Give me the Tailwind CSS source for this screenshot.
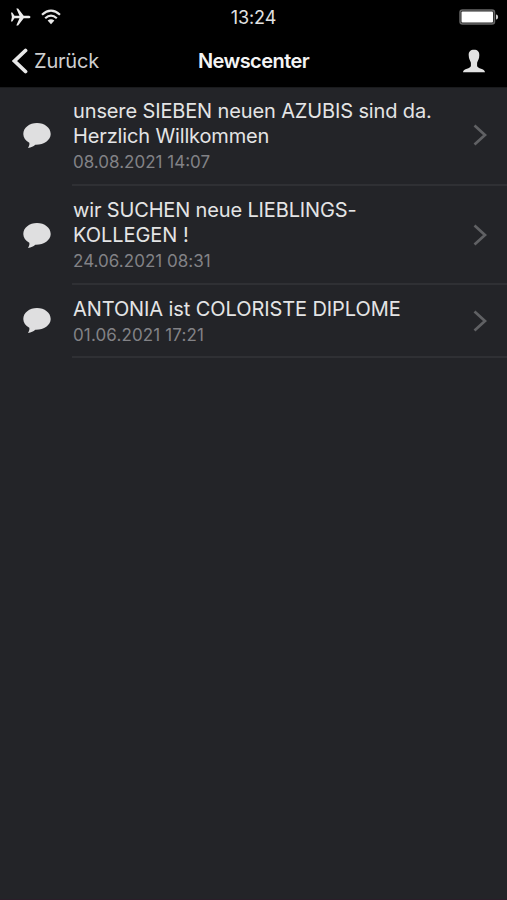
<!DOCTYPE html>
<html lang="de">
<head>
<meta charset="utf-8">
<title>Newscenter</title>
<script src="https://cdn.jsdelivr.net/npm/@tailwindcss/browser@4"></script>
</head>
<body class="bg-[#232428]">
<svg class="hidden">
  <symbol id="bubble" viewBox="0 0 28 26"><path d="M14 0C6.400 0 .3 4.700.3 11c0 3.600 2.200 6.700 6 8.700.5 1.900-.4 3.500-1.300 5.200 3.300-.4 5.300-1.500 7.300-3.200C20.500 22 27.700 17.400 27.700 11 27.700 4.700 21.600 0 14 0Z" fill="#dfdfe0"/></symbol>
  <symbol id="chevron" viewBox="0 0 14 22"><path d="M1.500 1.500 12 11 1.500 20.500" fill="none" stroke="#606164" stroke-width="2.700"/></symbol>
</svg>
<div class="flex h-[900px] w-[507px] flex-col overflow-hidden border-b border-[#2b1d29] bg-[#232428] font-['Inter','Liberation_Sans',sans-serif]">
  <header class="h-[88px] shrink-0 border-b border-[#1a1b1d] bg-black">
    <div class="grid h-[34px] grid-cols-3 items-center">
      <div class="flex items-center gap-[10px] pl-[10px]">
        <svg class="h-[18px] w-[21px]" viewBox="0 0 21 18"><path d="M1 4.500h1.300l2.200 3.200h5L6.300.5h1.800l5.600 7.200h4.500c3 0 3 2.600 0 2.600h-4.500l-5.600 7.200H6.300l3.200-7.200h-5l-2.200 3.200H1L1.900 9Z" fill="#eee"/></svg>
        <svg class="h-[16px] w-[20px]" viewBox="0 0 20 16"><g fill="none" stroke="#e8e8e8" stroke-width="2.200"><path d="M1 5.700Q10-2.300 19 5.700"/><path d="M4.200 9.200Q10 4 15.800 9.200"/></g><path d="M6.600 11.600Q10 8.800 13.400 11.600L10 15.200Z" fill="#e8e8e8"/></svg>
      </div>
      <div class="pt-px text-center text-[18px] leading-[22px] tracking-[-0.1px] text-[#e2e2e2]">13:24</div>
      <div class="flex justify-end pr-[8px]">
        <svg class="h-[16px] w-[40px]" viewBox="0 0 40 16"><rect x="1" y="1" width="34.500" height="14" rx="2.500" fill="#222" stroke="#666" stroke-width="1.500"/><rect x="2.500" y="2.500" width="31.500" height="11" rx="1" fill="#fff"/><path d="M37 5.500c2.800.3 2.800 4.700 0 5Z" fill="#ccc"/></svg>
      </div>
    </div>
    <div class="grid h-[53px] grid-cols-3 items-center">
      <div class="flex items-center gap-[6px] pl-[12px]">
        <svg class="h-[26px] w-[16px]" viewBox="0 0 16 26"><path d="M13.500 2.500 2.500 13l11 10.500" fill="none" stroke="#e8e8e8" stroke-width="3.800" stroke-linecap="round"/></svg>
        <span class="text-[20px] leading-[24px] tracking-[-0.2px] text-[#cfcfcf]">Zurück</span>
      </div>
      <h1 class="text-center text-[20px] font-semibold leading-[24px] tracking-[-0.560px] text-[#f4f4f4]">Newscenter</h1>
      <div class="flex justify-end pr-[22px]">
        <svg class="h-[24px] w-[22px]" viewBox="0 0 22 24"><path d="M11 .8c3.600 0 5.400 2 5.300 5.400 0 3.800-1.400 5-2.200 7.500v3c0 3.400 7.900 2.400 7.900 6.500H0c0-4.100 7.900-3.100 7.900-6.500v-3C7.100 11.200 5.800 10 5.700 6.200 5.600 2.800 7.400.8 11 .8Z" fill="#e2e2e2"/></svg>
      </div>
    </div>
  </header>
  <main>
    <article class="flex h-[98px]">
      <div class="flex w-[72px] shrink-0 items-center pb-[2px] pl-[23px]"><svg class="h-[26px] w-[28px]"><use href="#bubble"/></svg></div>
      <div class="flex flex-1 border-b-2 border-[#2f3034]">
        <div class="flex-1 whitespace-nowrap pl-px pt-[11px]">
          <h2 class="text-[20px] leading-[24.500px] text-[#e4e4e5]"><span class="tracking-[-0.130px]">unsere SIEBEN neuen AZUBIS sind da.</span><br><span class="tracking-[-0.140px]">Herzlich Willkommen</span></h2>
          <p class="mt-[4px] text-[17px] leading-[20px] text-[#828286]">08.08.2021 14:07</p>
        </div>
        <div class="flex w-[34px] shrink-0 items-center pb-[2px]"><svg class="h-[22px] w-[14px]"><use href="#chevron"/></svg></div>
      </div>
    </article>
    <article class="flex h-[99px]">
      <div class="flex w-[72px] shrink-0 items-center pl-[23px]"><svg class="h-[26px] w-[28px]"><use href="#bubble"/></svg></div>
      <div class="flex flex-1 border-b-2 border-[#2f3034]">
        <div class="flex-1 whitespace-nowrap pl-px pt-[12px]">
          <h2 class="text-[20px] leading-[24.500px] text-[#e4e4e5]"><span class="tracking-[-0.150px]">wir SUCHEN neue LIEBLINGS-</span><br><span class="tracking-[-0.050px]">KOLLEGEN !</span></h2>
          <p class="mt-[4px] text-[17px] leading-[20px] tracking-[0.030px] text-[#828286]">24.06.2021 08:31</p>
        </div>
        <div class="flex w-[34px] shrink-0 items-center"><svg class="h-[22px] w-[14px]"><use href="#chevron"/></svg></div>
      </div>
    </article>
    <article class="flex h-[73px]">
      <div class="flex w-[72px] shrink-0 items-center pb-[2px] pl-[23px]"><svg class="h-[26px] w-[28px]"><use href="#bubble"/></svg></div>
      <div class="flex flex-1 border-b-2 border-[#2f3034]">
        <div class="flex-1 whitespace-nowrap pl-px pt-[12px]">
          <h2 class="text-[20px] leading-[24.500px] tracking-[-0.090px] text-[#e4e4e5]">ANTONIA ist COLORISTE DIPLOME</h2>
          <p class="mt-[3px] text-[17px] leading-[20px] tracking-[0.130px] text-[#828286]">01.06.2021 17:21</p>
        </div>
        <div class="flex w-[34px] shrink-0 items-center"><svg class="h-[22px] w-[14px]"><use href="#chevron"/></svg></div>
      </div>
    </article>
  </main>
</div>
</body>
</html>
